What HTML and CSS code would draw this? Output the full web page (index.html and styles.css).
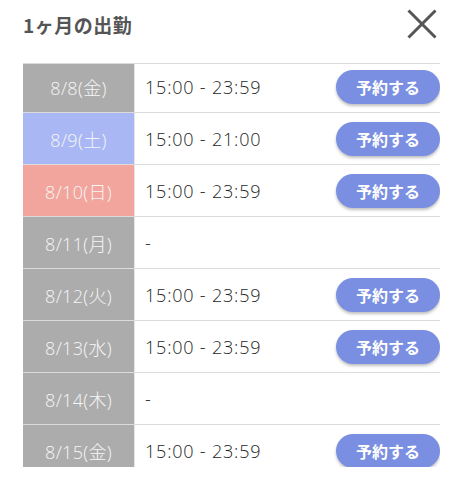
FILE: index.html
```html
<!DOCTYPE html>
<html lang="ja">
<head>
<meta charset="utf-8">
<link rel="stylesheet" href="styles.css">
</head>
<body>
<div class="modal">
  <div class="header">
    <h1 class="title">1ヶ月の出勤</h1>
    <button class="close" aria-label="閉じる">
      <svg width="30" height="30" viewBox="0 0 30 30"><path d="M1.5 1.5 L28.5 28.5 M28.5 1.5 L1.5 28.5" stroke="#555" stroke-width="3" fill="none"/></svg>
    </button>
  </div>
  <div class="scroll">
    <div class="list">
      <div class="row"><div class="date">8/8(金)</div><div class="time">15:00 - 23:59</div><button class="reserve">予約する</button></div>
      <div class="row"><div class="date sat">8/9(土)</div><div class="time">15:00 - 21:00</div><button class="reserve">予約する</button></div>
      <div class="row"><div class="date sun">8/10(日)</div><div class="time">15:00 - 23:59</div><button class="reserve">予約する</button></div>
      <div class="row"><div class="date">8/11(月)</div><div class="time">-</div></div>
      <div class="row"><div class="date">8/12(火)</div><div class="time">15:00 - 23:59</div><button class="reserve">予約する</button></div>
      <div class="row"><div class="date">8/13(水)</div><div class="time">15:00 - 23:59</div><button class="reserve">予約する</button></div>
      <div class="row"><div class="date">8/14(木)</div><div class="time">-</div></div>
      <div class="row"><div class="date">8/15(金)</div><div class="time">15:00 - 23:59</div><button class="reserve">予約する</button></div>
    </div>
  </div>
</div>
</body>
</html>
```
FILE: styles.css
```css
* { box-sizing: border-box; }
html, body { margin: 0; padding: 0; background: #fff; }
body { font-family: "Open Sans", "Noto Sans CJK JP", sans-serif; }
.modal { width: 462px; height: 480px; padding: 0 22px 0 23px; overflow: hidden; }
.header { height: 64px; display: flex; align-items: flex-start; justify-content: space-between; border-bottom: 1px solid #dcdcdc; }
.title { margin: 11px 0 0; font-family: "Noto Sans CJK JP", sans-serif; font-size: 19px; font-weight: 700; color: #555; letter-spacing: 0.5px; }
.close { margin: 9px 3px 0 0; padding: 0; border: 0; background: none; width: 30px; height: 30px; display: block; }
.close svg { display: block; }
.scroll { height: 403px; overflow: hidden; }
.list { margin-top: -3px; }
.row { display: flex; align-items: center; height: 52px; border-bottom: 1px solid #dcdcdc; }
.date { width: 112px; height: 100%; background: #acacac; color: #f6f6f6; font-size: 18px; font-weight: 300; letter-spacing: 0.3px; display: flex; align-items: center; justify-content: center; border-right: 1px solid #e6e6e6; }
.date.sat { background: #a9b8f4; }
.date.sun { background: #f2a59d; }
.time { flex: 1; padding-left: 10px; font-size: 18px; font-weight: 300; letter-spacing: 0.8px; color: #1e1e1e; }
.reserve { width: 104px; height: 34px; border: 0; border-radius: 17px; background: #7a8fe1; color: #fff; font-family: "Noto Sans CJK JP", sans-serif; font-size: 16px; font-weight: 700; box-shadow: 0 2px 3px rgba(0,0,0,0.25); padding: 0; }
```
